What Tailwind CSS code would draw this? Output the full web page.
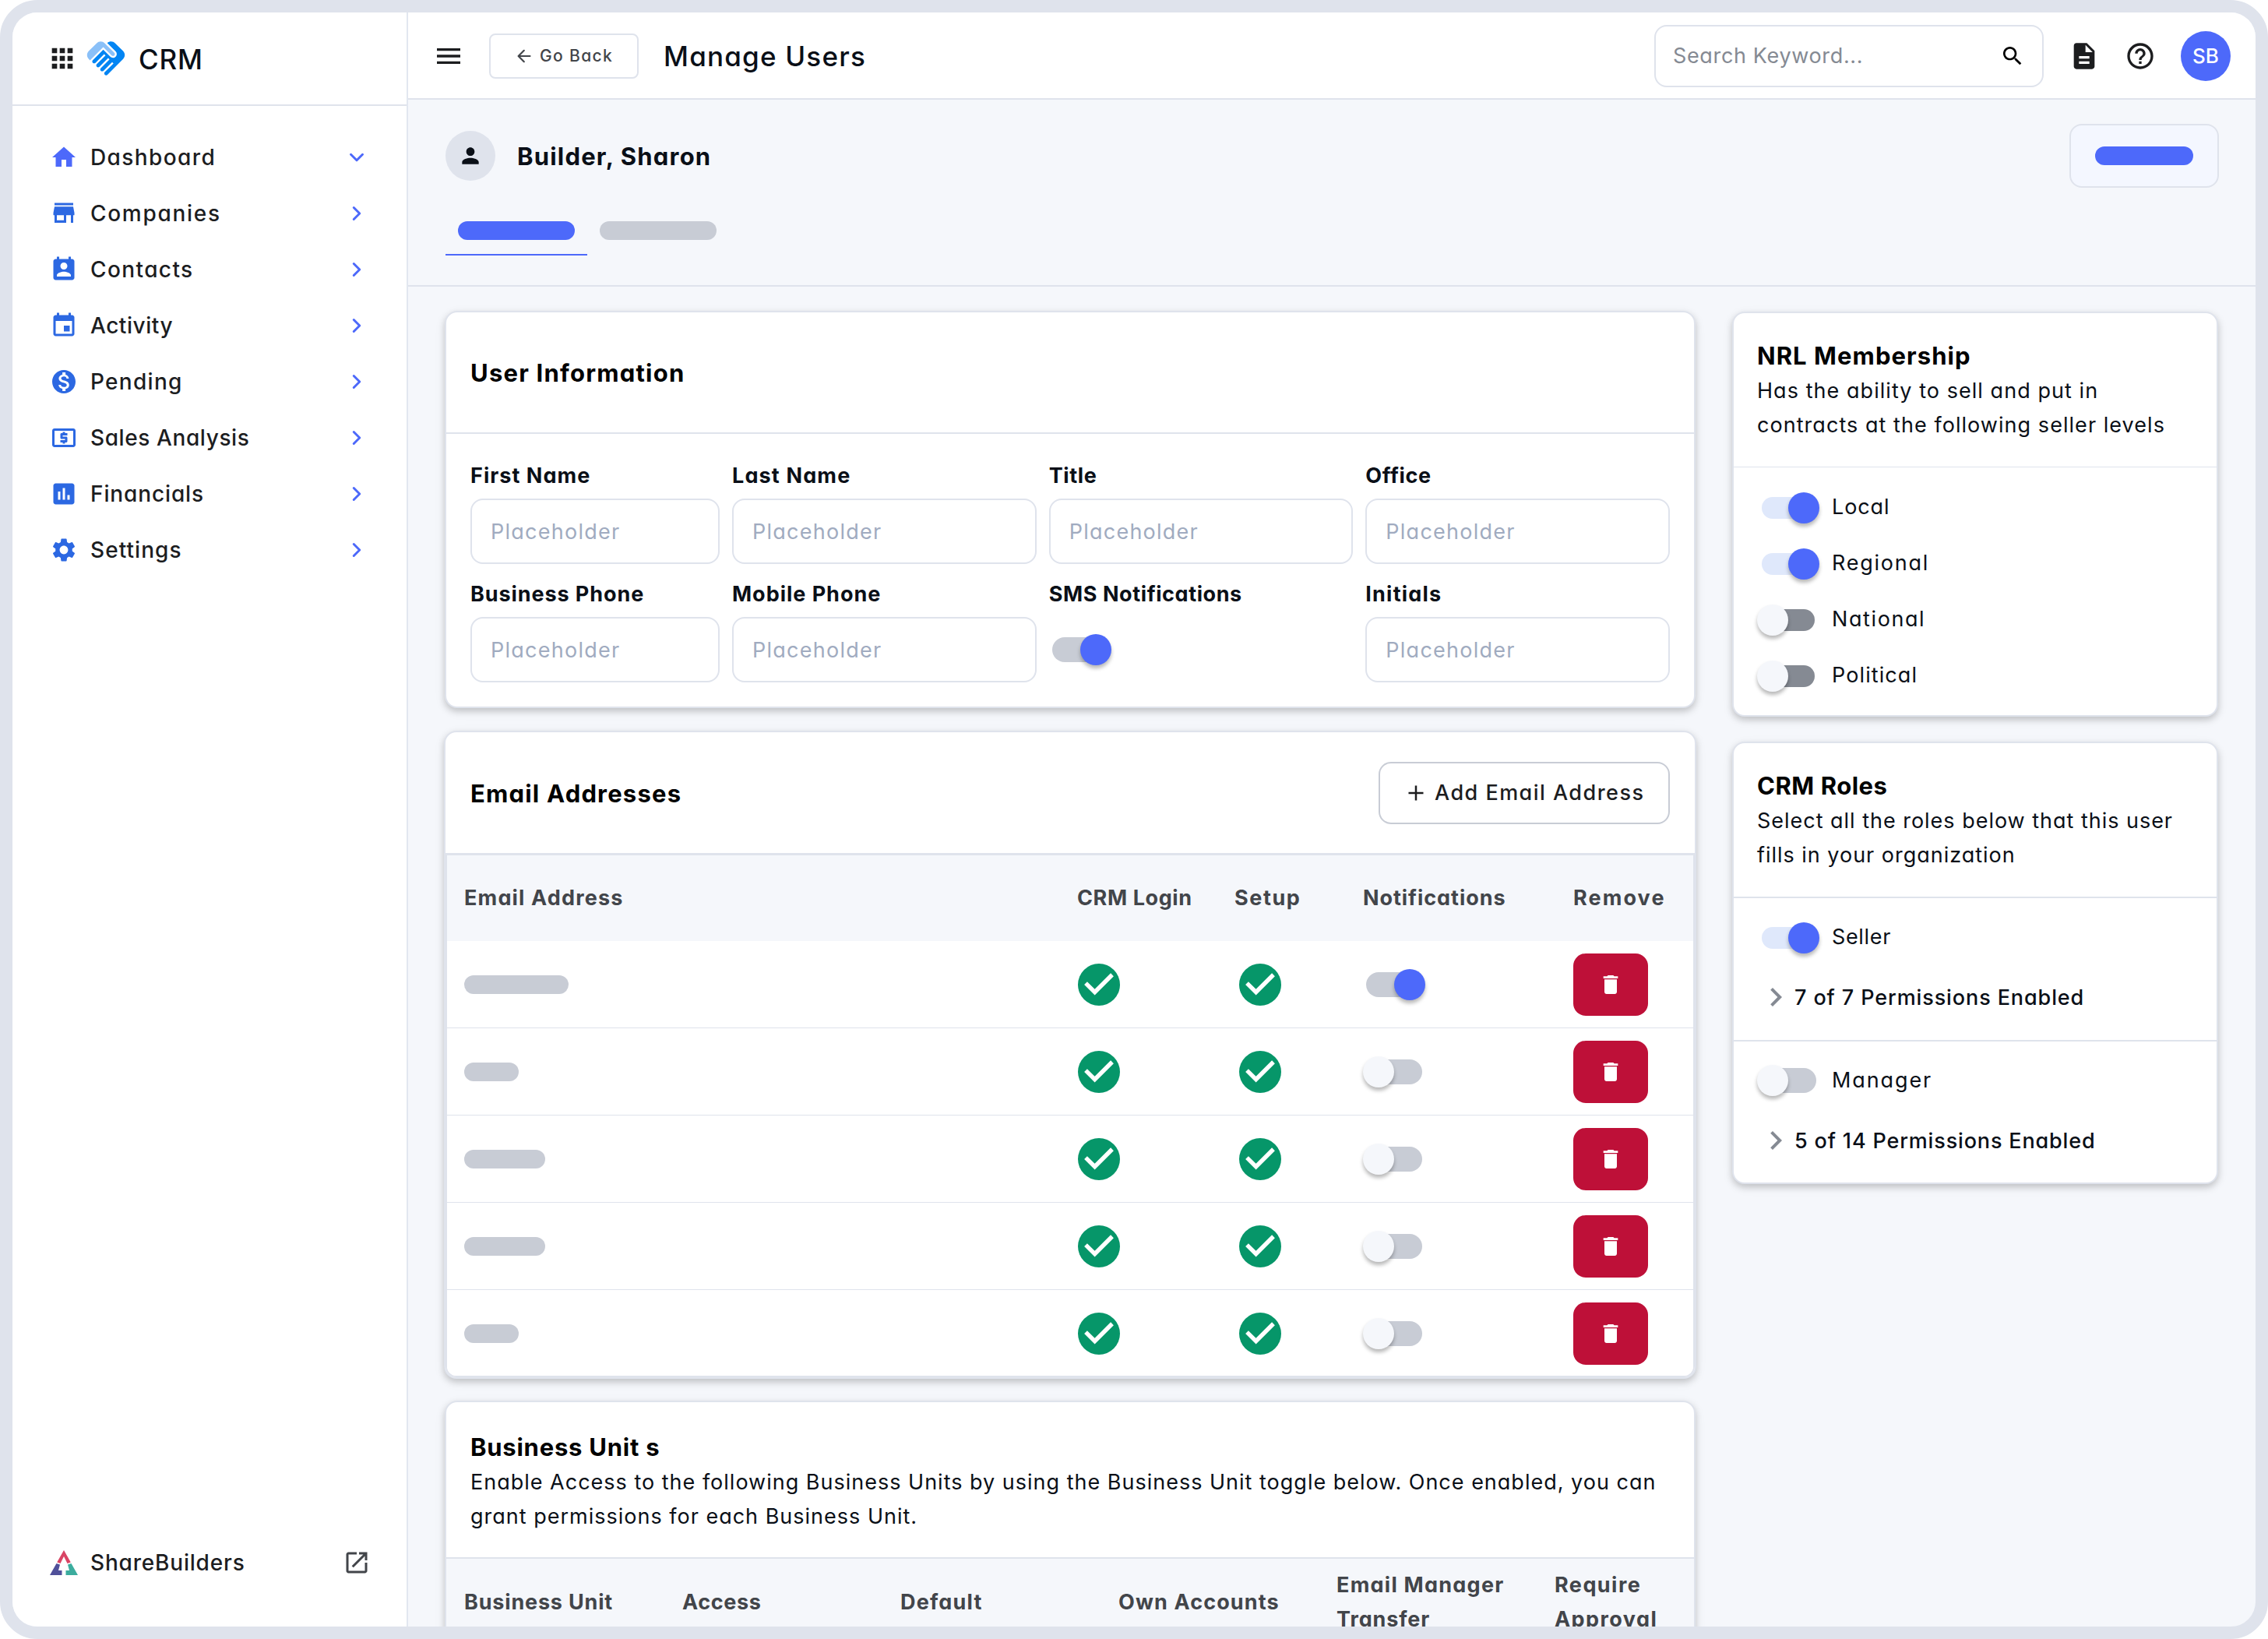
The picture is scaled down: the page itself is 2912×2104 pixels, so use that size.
<!DOCTYPE html>
<html lang="en">
<head>
  <meta charset="UTF-8" />
  <title>CRM - Manage Users</title>
  <!-- Tailwind CSS CDN -->
  <script src="https://cdn.jsdelivr.net/npm/@tailwindcss/browser@4"></script>
</head>
<body class="bg-white font-[Inter,'Open_Sans',sans-serif] [font-feature-settings:'cv11'] text-[27px] leading-[44px] text-[#0a0f17]">

<div class="flex w-[2912px] h-[2104px] overflow-hidden rounded-[48px] border-[16px] border-[#dfe3ec] bg-[#f5f7fb]">

  <!-- Sidebar -->
  <aside class="flex flex-col shrink-0 w-[508px] h-full bg-white border-r-2 border-[#e2e7f0]">
    <div class="flex items-center h-[120px] shrink-0 pl-11 border-b-2 border-[#dfe3ec]">
      <svg class="size-10 text-[#1c1d1f]" viewBox="0 0 24 24" fill="currentColor"><path d="M4 8h4V4H4v4zm6 12h4v-4h-4v4zm-6 0h4v-4H4v4zm0-6h4v-4H4v4zm6 0h4v-4h-4v4zm6-10v4h4V4h-4zm-6 4h4V4h-4v4zm6 6h4v-4h-4v4zm0 6h4v-4h-4v4z"/></svg>
      <svg class="ml-[7px] size-[58px]" viewBox="0 0 24 24">
        <path fill="#8ac0f8" d="M16.48 10.41c-.39.39-1.04.39-1.43 0l-4.47-4.46-7.05 7.04-.66-.63c-1.17-1.17-1.17-3.07 0-4.24l4.24-4.24c1.17-1.17 3.07-1.17 4.24 0L16.48 9c.39.39.39 1.02 0 1.41z"/>
        <path fill="#0385f3" d="M17.18 8.29c.78.78.78 2.05 0 2.83-1.27 1.27-2.61.22-2.83 0l-3.76-3.76-5.57 5.57c-.39.39-.39 1.02 0 1.41s1.02.39 1.42 0l4.62-4.62.71.71-4.62 4.62c-.39.39-.39 1.02 0 1.41s1.02.39 1.42 0l4.62-4.62.71.71-4.62 4.62c-.39.39-.39 1.02 0 1.41s1.02.39 1.41 0l4.62-4.62.71.71-4.62 4.62c-.39.39-.39 1.02 0 1.41s1.02.39 1.41 0l8.32-8.34c1.17-1.17 1.17-3.07 0-4.24l-4.24-4.24c-1.15-1.15-3.01-1.17-4.18-.06l4.47 4.47z"/>
      </svg>
      <span class="ml-[13px] pt-px text-[35px] font-medium tracking-[0.8px]">CRM</span>
    </div>

    <nav id="nav" class="flex flex-col pt-[30px] text-[28px] font-medium text-[#1c1d1f]">
      <!-- Menu items inserted dynamically -->
    </nav>

    <div class="flex items-center mt-auto mb-[46px] h-[72px] pl-12 pr-[46px] text-[#1c1d1f]">
      <svg class="w-9 h-8" viewBox="0 0 36 32">
        <path fill="#d94464" d="M18 0l8.800 15.500-4.300 1.500L18 8l-4.500 9-4.300-1.500z"/>
        <path fill="#50509a" d="M8.500 17l4.500 1.500-2 7.500h4.500v6H0z"/>
        <path fill="#3cac9e" d="M27.500 17L23 18.500l2 7.500h-4.500v6H36z"/>
      </svg>
      <span class="ml-4 text-[28px] font-medium tracking-[0.81px]">ShareBuilders</span>
      <svg class="ml-auto size-9 text-[#42454a]" viewBox="0 0 24 24" fill="currentColor"><path d="M19 19H5V5h7V3H5c-1.11 0-2 .9-2 2v14c0 1.1.89 2 2 2h14c1.1 0 2-.9 2-2v-7h-2v7zM14 3v2h3.590l-9.830 9.830 1.410 1.410L19 6.410V10h2V3h-7z"/></svg>
    </div>
  </aside>

  <main class="flex-1 min-w-0 h-full overflow-hidden">

    <!-- Top bar -->
    <header class="flex items-center h-[112px] pt-0.5 px-8 bg-white border-b-2 border-[#dfe3ec]">
      <svg class="size-10 text-[#1c1d1f]" viewBox="0 0 24 24" fill="currentColor"><path d="M3 18h18v-2H3v2zm0-5h18v-2H3v2zm0-7v2h18V6H3z"/></svg>
      <button class="flex items-center ml-8 w-48 h-[58px] pl-[34px] rounded-lg border-2 border-[#dfe3ec] text-[21px] font-medium tracking-[1.35px] text-[#42454a]">
        <svg class="size-[18px] mr-[11px]" viewBox="0 0 18 18" fill="none" stroke="currentColor" stroke-width="2.200" stroke-linecap="round" stroke-linejoin="round"><path d="M16.500 9H2M8.800 1.800L1.600 9l7.200 7.200"/></svg>
        Go Back
      </button>
      <h1 class="ml-8 text-[35px] font-medium tracking-[1.2px]">Manage Users</h1>
      <div class="flex items-center justify-between ml-auto w-[500px] h-20 px-[22px] rounded-2xl border-2 border-[#dfe3ec]">
        <span class="tracking-[0.65px] text-[#858a93]">Search Keyword...</span>
        <svg class="size-8 text-black" viewBox="0 0 24 24" fill="currentColor"><path d="M15.500 14h-.79l-.28-.27C15.410 12.590 16 11.110 16 9.500 16 5.910 13.090 3 9.500 3S3 5.910 3 9.500 5.910 16 9.500 16c1.610 0 3.090-.59 4.230-1.570l.27.28v.79l5 4.990L20.490 19l-4.990-5zm-6 0C7.010 14 5 11.990 5 9.500S7.010 5 9.500 5 14 7.010 14 9.500 11.990 14 9.500 14z"/></svg>
      </div>
      <svg class="ml-8 size-10 text-[#1c1d1f]" viewBox="0 0 24 24" fill="currentColor"><path d="M14 2H6c-1.100 0-1.990.9-1.990 2L4 20c0 1.100.89 2 1.990 2H18c1.100 0 2-.9 2-2V8l-6-6zm2 16H8v-2h8v2zm0-4H8v-2h8v2zm-3-5V3.500L18.500 9H13z"/></svg>
      <svg class="ml-8 size-10 text-[#1c1d1f]" viewBox="0 0 24 24" fill="currentColor"><path d="M11 18h2v-2h-2v2zm1-16C6.480 2 2 6.480 2 12s4.480 10 10 10 10-4.480 10-10S17.520 2 12 2zm0 18c-4.410 0-8-3.590-8-8s3.590-8 8-8 8 3.590 8 8-3.590 8-8 8zm0-14c-2.210 0-4 1.790-4 4h2c0-1.100.9-2 2-2s2 .9 2 2c0 2-3 1.750-3 5h2c0-2.250 3-2.500 3-5 0-2.210-1.790-4-4-4z"/></svg>
      <div class="flex items-center justify-center ml-8 size-16 rounded-full bg-[#4d69fa] text-[26px] font-medium text-white">SB</div>
    </header>

    <!-- Profile header and tabs -->
    <section class="h-[240px] pt-[31px] pl-12 pr-[47px] border-b-2 border-[#dfe3ec]">
      <div class="flex items-center h-[82px]">
        <div class="flex items-center justify-center size-16 rounded-full bg-[#dfe3ec]">
          <svg class="size-8" viewBox="0 0 24 24" fill="currentColor"><path d="M12 12c2.210 0 4-1.790 4-4s-1.790-4-4-4-4 1.790-4 4 1.790 4 4 4zm0 2c-2.670 0-8 1.340-8 4v2h16v-2c0-2.660-5.330-4-8-4z"/></svg>
        </div>
        <h2 class="ml-7 pt-px text-[31px] font-bold tracking-[1.2px]">Builder, Sharon</h2>
        <button class="flex items-center justify-center ml-auto w-48 h-[82px] rounded-2xl border-2 border-[#dfe3ec] bg-[#f4f7ff]">
          <span class="w-[126px] h-6 rounded-full bg-[#4d69fa]"></span>
        </button>
      </div>
      <div class="flex mt-[43px]">
        <div class="px-4 pb-[18px] border-b-2 border-[#4d69fa]"><div class="w-[150px] h-6 rounded-full bg-[#4d69fa]"></div></div>
        <div class="px-4"><div class="w-[150px] h-6 rounded-full bg-[#c8ccd5]"></div></div>
      </div>
    </section>

    <div class="flex items-start">
      <div class="w-[1608px] ml-[46px] pt-[31px]">

        <!-- User Information -->
        <section class="mx-px h-[510px] rounded-2xl border-2 border-[#dfe3ec] bg-white shadow-[0_4px_8px_rgba(0,0,0,0.18),0_4px_16px_rgba(0,0,0,0.06)]">
          <div class="flex items-center h-[156px] pt-0.5 px-[31px] border-b-2 border-[#dfe3ec]">
            <h3 class="text-[31px] font-bold tracking-[1.22px] text-black">User Information</h3>
          </div>
          <div class="grid grid-cols-[320px_1fr_1fr_1fr] gap-x-4 gap-y-5 px-[31px] pt-[35px]">
            <div>
              <div class="h-9 mb-3 leading-[38px] font-bold tracking-[1.05px]">First Name</div>
              <div class="flex items-center h-[84px] pt-0.5 px-6 rounded-2xl border-2 border-[#dfe3ec] tracking-[1.25px] text-[#a0abc0]">Placeholder</div>
            </div>
            <div>
              <div class="h-9 mb-3 leading-[38px] font-bold tracking-[1.15px]">Last Name</div>
              <div class="flex items-center h-[84px] pt-0.5 px-6 rounded-2xl border-2 border-[#dfe3ec] tracking-[1.25px] text-[#a0abc0]">Placeholder</div>
            </div>
            <div>
              <div class="h-9 mb-3 leading-[38px] font-bold tracking-[0.63px]">Title</div>
              <div class="flex items-center h-[84px] pt-0.5 px-6 rounded-2xl border-2 border-[#dfe3ec] tracking-[1.25px] text-[#a0abc0]">Placeholder</div>
            </div>
            <div>
              <div class="h-9 mb-3 leading-[38px] font-bold tracking-[0.62px]">Office</div>
              <div class="flex items-center h-[84px] pt-0.5 px-6 rounded-2xl border-2 border-[#dfe3ec] tracking-[1.25px] text-[#a0abc0]">Placeholder</div>
            </div>
            <div>
              <div class="h-9 mb-3 leading-[38px] font-bold tracking-[0.91px]">Business Phone</div>
              <div class="flex items-center h-[84px] pt-0.5 px-6 rounded-2xl border-2 border-[#dfe3ec] tracking-[1.25px] text-[#a0abc0]">Placeholder</div>
            </div>
            <div>
              <div class="h-9 mb-3 leading-[38px] font-bold tracking-[0.97px]">Mobile Phone</div>
              <div class="flex items-center h-[84px] pt-0.5 px-6 rounded-2xl border-2 border-[#dfe3ec] tracking-[1.25px] text-[#a0abc0]">Placeholder</div>
            </div>
            <div>
              <div class="h-9 mb-3 leading-[38px] font-bold tracking-[0.59px]">SMS Notifications</div>
              <div class="flex items-center h-[84px] pl-1">
                <div class="flex items-center justify-end w-[72px] h-8 rounded-full bg-[#c8ccd5]">
                  <div class="size-10 shrink-0 -mr-1 rounded-full bg-[#4d69fa] shadow-[0_4px_5px_rgba(0,0,0,0.28)]"></div>
                </div>
              </div>
            </div>
            <div>
              <div class="h-9 mb-3 leading-[38px] font-bold tracking-[1.2px]">Initials</div>
              <div class="flex items-center h-[84px] pt-0.5 px-6 rounded-2xl border-2 border-[#dfe3ec] tracking-[1.25px] text-[#a0abc0]">Placeholder</div>
            </div>
          </div>
        </section>

        <!-- Email Addresses -->
        <section class="mt-[29px] h-[832px] rounded-2xl border-2 border-[#dfe3ec] bg-white shadow-[0_4px_8px_rgba(0,0,0,0.18),0_4px_16px_rgba(0,0,0,0.06)]">
          <div class="flex items-center justify-between h-[155px] px-8">
            <h3 class="pt-0.5 text-[31px] font-bold tracking-[1.2px] text-black">Email Addresses</h3>
            <button class="flex items-center w-[374px] h-20 pl-[36px] rounded-2xl border-2 border-[#c8ccd5] font-medium tracking-[1.47px] text-[#1c1d1f]">
              <svg class="size-5 mr-[14px]" viewBox="0 0 20 20" fill="none" stroke="currentColor" stroke-width="2.500"><path d="M10 .5v19M.5 10h19"/></svg>
              Add Email Address
            </button>
          </div>
          <div class="h-[673px] overflow-hidden rounded-b-[14px] border-x-2 border-b-2 border-t-[3px] border-[#dfe3ec]">
            <div class="grid grid-cols-[787px_202px_165px_270px_1fr] items-center h-[110px] pl-[22px] bg-[#f5f7fb] font-bold text-[#42454a]">
              <div class="tracking-[1.17px]">Email Address</div>
              <div class="tracking-[0.6px]">CRM Login</div>
              <div class="tracking-[1.6px]">Setup</div>
              <div class="tracking-[0.94px]">Notifications</div>
              <div class="tracking-[2.1px]">Remove</div>
            </div>
            <div id="emailRows">
              <!-- Email rows inserted dynamically -->
            </div>
          </div>
        </section>

        <!-- Business Units -->
        <section class="mx-px mt-7 h-[400px] rounded-t-2xl border-2 border-[#dfe3ec] bg-white shadow-[0_4px_8px_rgba(0,0,0,0.18),0_4px_16px_rgba(0,0,0,0.06)]">
          <div class="h-[201px] px-[31px] pt-[35px] border-b-2 border-[#dfe3ec] whitespace-nowrap">
            <h3 class="leading-[46px] text-[31px] font-bold tracking-[0.76px] text-black">Business Unit s</h3>
            <p class="tracking-[1px]">Enable Access to the following Business Units by using the Business Unit toggle below. Once enabled, you can<br />grant permissions for each Business Unit.</p>
          </div>
          <div class="grid grid-cols-[280px_280px_280px_280px_280px_1fr] items-center h-[111px] pl-[23px] bg-[#f5f7fb] font-bold text-[#42454a]">
            <div class="tracking-[0.82px]">Business Unit</div>
            <div class="tracking-[0.64px]">Access</div>
            <div class="tracking-[1.2px]">Default</div>
            <div class="tracking-[1.13px]">Own Accounts</div>
            <div class="tracking-[1.25px]">Email Manager<br /><span class="tracking-[0.9px]">Transfer</span></div>
            <div class="tracking-[1.45px]">Require<br />Approval</div>
          </div>
        </section>
      </div>

      <!-- Right column -->
      <div class="w-[624px] ml-[46px] pt-8">
        <section class="h-[520px] rounded-2xl border-2 border-[#dfe3ec] bg-white shadow-[0_4px_8px_rgba(0,0,0,0.18),0_4px_16px_rgba(0,0,0,0.06)]">
          <div class="h-[198px] px-[30px] pt-8 border-b border-[#dfe3ec] whitespace-nowrap">
            <h3 class="leading-[46px] text-[31px] font-bold tracking-[1.06px] text-black">NRL Membership</h3>
            <p class="tracking-[1.05px]">Has the ability to sell and put in<br />contracts at the following seller levels</p>
          </div>
          <div class="px-[30px] pt-[15px]">
            <div class="flex items-center h-[72px]">
              <div class="flex items-center justify-end ml-1.5 mt-0.5 mr-[22px] w-[68px] h-7 rounded-full bg-[#dfe8fb]">
                <div class="size-10 shrink-0 -mr-1.5 rounded-full bg-[#4d69fa] shadow-[0_4px_5px_rgba(0,0,0,0.28)]"></div>
              </div>
              <span class="tracking-[0.9px]">Local</span>
            </div>
            <div class="flex items-center h-[72px]">
              <div class="flex items-center justify-end ml-1.5 mt-0.5 mr-[22px] w-[68px] h-7 rounded-full bg-[#dfe8fb]">
                <div class="size-10 shrink-0 -mr-1.5 rounded-full bg-[#4d69fa] shadow-[0_4px_5px_rgba(0,0,0,0.28)]"></div>
              </div>
              <span class="tracking-[1.75px]">Regional</span>
            </div>
            <div class="flex items-center h-[72px]">
              <div class="flex items-center ml-1.5 mt-0.5 mr-[22px] w-[68px] h-7 rounded-full bg-[#858a93]">
                <div class="size-10 shrink-0 -ml-1.5 rounded-full bg-[#f5f7fb] shadow-[0_4px_5px_rgba(0,0,0,0.28)]"></div>
              </div>
              <span class="tracking-[1.6px]">National</span>
            </div>
            <div class="flex items-center h-[72px]">
              <div class="flex items-center ml-1.5 mt-0.5 mr-[22px] w-[68px] h-7 rounded-full bg-[#858a93]">
                <div class="size-10 shrink-0 -ml-1.5 rounded-full bg-[#f5f7fb] shadow-[0_4px_5px_rgba(0,0,0,0.28)]"></div>
              </div>
              <span class="tracking-[1.1px]">Political</span>
            </div>
          </div>
        </section>

        <section class="mt-8 h-[568px] rounded-2xl border-2 border-[#dfe3ec] bg-white shadow-[0_4px_8px_rgba(0,0,0,0.18),0_4px_16px_rgba(0,0,0,0.06)]">
          <div class="h-[199px] px-[30px] pt-8 border-b-2 border-[#dfe3ec] whitespace-nowrap">
            <h3 class="leading-[46px] text-[31px] font-bold tracking-[0.53px] text-black">CRM Roles</h3>
            <p class="tracking-[0.98px]">Select all the roles below that this user<br />fills in your organization</p>
          </div>
          <div class="h-[184px] px-[30px] pt-[14px] border-b-2 border-[#dfe3ec]">
            <div class="flex items-center h-[72px]">
              <div class="flex items-center justify-end ml-1.5 mt-0.5 mr-[22px] w-[68px] h-7 rounded-full bg-[#dfe8fb]">
                <div class="size-10 shrink-0 -mr-1.5 rounded-full bg-[#4d69fa] shadow-[0_4px_5px_rgba(0,0,0,0.28)]"></div>
              </div>
              <span class="tracking-[0.65px]">Seller</span>
            </div>
            <div class="flex items-center h-[82px]">
              <svg class="size-12 text-[#858a93]" viewBox="0 0 24 24" fill="currentColor"><path d="M10 6L8.590 7.410 13.170 12l-4.580 4.590L10 18l6-6z"/></svg>
              <span class="pt-px font-medium tracking-[0.89px]">7 of 7 Permissions Enabled</span>
            </div>
          </div>
          <div class="px-[30px] pt-[14px]">
            <div class="flex items-center h-[72px]">
              <div class="flex items-center ml-1 mr-5 w-[72px] h-8 rounded-full bg-[#c8ccd5]">
                <div class="size-10 shrink-0 -ml-1 rounded-full bg-[#f5f7fb] shadow-[0_4px_5px_rgba(0,0,0,0.28)]"></div>
              </div>
              <span class="tracking-[1.9px]">Manager</span>
            </div>
            <div class="flex items-center h-[82px]">
              <svg class="size-12 text-[#858a93]" viewBox="0 0 24 24" fill="currentColor"><path d="M10 6L8.590 7.410 13.170 12l-4.580 4.590L10 18l6-6z"/></svg>
              <span class="pt-px font-medium tracking-[0.84px]">5 of 14 Permissions Enabled</span>
            </div>
          </div>
        </section>
      </div>
    </div>
  </main>
</div>

<script>
  const menu = [
    { label: 'Dashboard', open: true, color: 'text-[#4d69fa]', tracking: 'tracking-[1.4px]', icon: 'M10 20v-6h4v6h5v-8h3L12 3 2 12h3v8z' },
    { label: 'Companies', color: 'text-[#2c68e2]', tracking: 'tracking-[1.7px]', icon: 'M20 3H4v2h16V3zm1 10.500v-2l-1-5.300H4l-1 5.300v2h1v6.500h10v-6.500h4v6.500h2v-6.500h1zm-9 4.300H6v-4.300h6v4.300z' },
    { label: 'Contacts', color: 'text-[#2c68e2]', tracking: 'tracking-[1.4px]', icon: 'M19 3h-1V1h-2v2H8V1H6v2H5c-1.110 0-2 .9-2 2v14c0 1.100.89 2 2 2h14c1.100 0 2-.9 2-2V5c0-1.100-.9-2-2-2zm-7 3c1.660 0 3 1.340 3 3s-1.340 3-3 3-3-1.340-3-3 1.340-3 3-3zm6 12H6v-1c0-2 4-3.100 6-3.100s6 1.100 6 3.100v1z' },
    { label: 'Activity', color: 'text-[#2c68e2]', tracking: 'tracking-[0.54px]', icon: 'M17 12h-5v5h5v-5zM16 1v2H8V1H6v2H5c-1.110 0-1.990.9-1.990 2L3 19c0 1.100.89 2 2 2h14c1.100 0 2-.9 2-2V5c0-1.100-.9-2-2-2h-1V1h-2zm3 18H5V8h14v11z' },
    { label: 'Pending', color: 'text-[#2c68e2]', tracking: 'tracking-[1.3px]', icon: 'M12 2C6.480 2 2 6.480 2 12s4.480 10 10 10 10-4.480 10-10S17.520 2 12 2zm1.410 16.090V20h-2.670v-1.930c-1.710-.36-3.160-1.460-3.270-3.400h1.960c.1 1.050.82 1.870 2.650 1.870 1.960 0 2.400-.98 2.400-1.590 0-.83-.44-1.610-2.670-2.140-2.480-.6-4.180-1.620-4.180-3.670 0-1.720 1.390-2.840 3.110-3.210V4h2.670v1.950c1.860.45 2.790 1.860 2.850 3.390H14.300c-.05-1.110-.64-1.870-2.220-1.870-1.500 0-2.400.68-2.400 1.640 0 .84.65 1.390 2.670 1.910s4.180 1.390 4.180 3.910c-.01 1.830-1.380 2.830-3.120 3.160z' },
    { label: 'Sales Analysis', color: 'text-[#2c68e2]', tracking: 'tracking-[0.6px]', icon: 'M11 17h2v-1h1c.55 0 1-.45 1-1v-3c0-.55-.45-1-1-1h-3v-1h4V8h-2V7h-2v1h-1c-.55 0-1 .45-1 1v3c0 .55.45 1 1 1h3v1H9v2h2v1zm9-13H4c-1.110 0-1.990.89-1.990 2L2 18c0 1.110.89 2 2 2h16c1.110 0 2-.89 2-2V6c0-1.110-.89-2-2-2zm0 14H4V6h16v12z' },
    { label: 'Financials', color: 'text-[#2c68e2]', tracking: 'tracking-[0.88px]', icon: 'M19 3H5c-1.100 0-2 .9-2 2v14c0 1.100.9 2 2 2h14c1.100 0 2-.9 2-2V5c0-1.100-.9-2-2-2zM9 17H7v-7h2v7zm4 0h-2V7h2v10zm4 0h-2v-4h2v4z' },
    { label: 'Settings', color: 'text-[#2c68e2]', tracking: 'tracking-[1.06px]', icon: 'M19.140 12.940c.04-.3.06-.61.06-.94 0-.32-.02-.64-.07-.94l2.030-1.580c.18-.14.23-.41.12-.61l-1.920-3.320c-.12-.22-.37-.29-.59-.22l-2.390.96c-.5-.38-1.030-.7-1.620-.94l-.36-2.540c-.04-.24-.24-.41-.48-.41h-3.840c-.24 0-.43.17-.47.41l-.36 2.540c-.59.24-1.130.57-1.620.94l-2.390-.96c-.22-.08-.47 0-.59.22L2.740 8.870c-.12.21-.08.47.12.61l2.030 1.580c-.05.3-.09.63-.09.94s.02.64.07.94l-2.030 1.580c-.18.14-.23.41-.12.61l1.920 3.320c.12.22.37.29.59.22l2.390-.96c.5.38 1.030.7 1.620.94l.36 2.540c.05.24.24.41.48.41h3.840c.24 0 .44-.17.47-.41l.36-2.540c.59-.24 1.130-.56 1.620-.94l2.390.96c.22.08.47 0 .59-.22l1.920-3.320c.12-.22.07-.47-.12-.61l-2.010-1.580zM12 15.600c-1.980 0-3.600-1.620-3.600-3.600s1.620-3.600 3.600-3.600 3.600 1.620 3.600 3.600-1.620 3.600-3.600 3.600z' }
  ];

  // Each row: chevron points down when the group is open
  document.getElementById('nav').innerHTML = menu.map(item => `
    <a class="flex items-center h-[72px] pl-12 pr-[46px]">
      <svg class="size-9 ${item.color}" viewBox="0 0 24 24" fill="currentColor"><path d="${item.icon}"/></svg>
      <span class="ml-4 ${item.tracking}">${item.label}</span>
      <svg class="ml-auto size-9 text-[#4d69fa]" viewBox="0 0 24 24" fill="none" stroke="currentColor" stroke-width="2" stroke-linecap="round" stroke-linejoin="round"><path d="${item.open ? 'M7 9.500l5 5 5-5' : 'M9.500 7l5 5-5 5'}"/></svg>
    </a>`).join('');

  const emails = [
    { width: 134, notify: true },
    { width: 70, notify: false },
    { width: 104, notify: false },
    { width: 104, notify: false },
    { width: 70, notify: false }
  ];

  const check = '<svg class="size-[54px]" viewBox="2 2 20 20"><circle cx="12" cy="12" r="10" fill="#069669"/><path fill="#fff" d="M10 17l-5-5 1.410-1.410L10 14.170l7.590-7.590L19 8l-9 9z"/></svg>';
  const toggleOn = '<div class="flex items-center justify-end ml-1 w-[72px] h-8 rounded-full bg-[#c8ccd5]"><div class="size-10 shrink-0 -mr-1 rounded-full bg-[#4d69fa] shadow-[0_4px_5px_rgba(0,0,0,0.28)]"></div></div>';
  const toggleOff = '<div class="flex items-center ml-1 w-[72px] h-8 rounded-full bg-[#c8ccd5]"><div class="size-10 shrink-0 -ml-1 rounded-full bg-[#f5f7fb] shadow-[0_4px_5px_rgba(0,0,0,0.28)]"></div></div>';

  document.getElementById('emailRows').innerHTML = emails.map(row => `
    <div class="grid grid-cols-[787px_202px_165px_270px_1fr] items-center h-[112px] pt-px pl-[22px] border-b border-[#dfe3ec] bg-white">
      <div class="h-6 rounded-full bg-[#c8ccd5]" style="width: ${row.width}px"></div>
      <div class="pl-px">${check}</div>
      <div class="pl-1.5">${check}</div>
      <div>${row.notify ? toggleOn : toggleOff}</div>
      <button class="flex items-center justify-center w-24 h-20 rounded-2xl bg-[#be1038] text-white">
        <svg class="size-8" viewBox="0 0 24 24" fill="currentColor"><path d="M6 19c0 1.100.9 2 2 2h8c1.100 0 2-.9 2-2V7H6v12zM19 4h-3.500l-1-1h-5l-1 1H5v2h14V4z"/></svg>
      </button>
    </div>`).join('');
</script>
</body>
</html>
